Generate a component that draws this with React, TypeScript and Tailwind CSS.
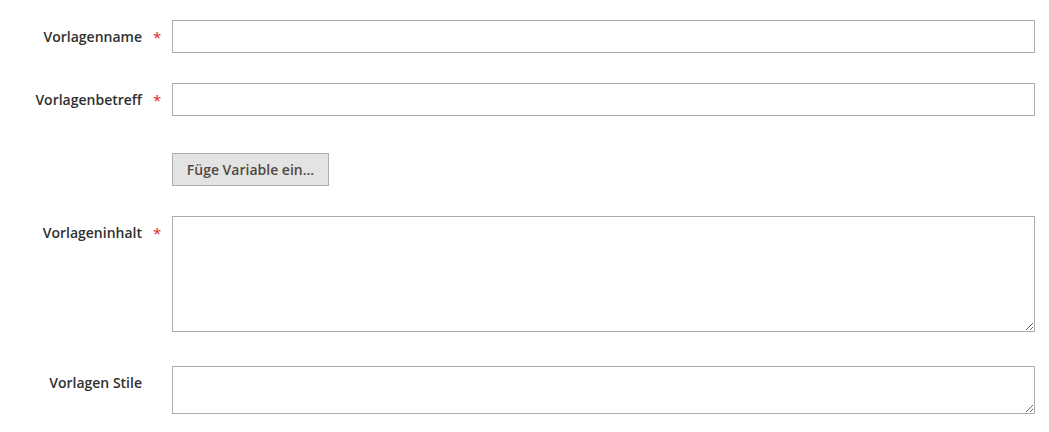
import React from "react";

function Label({ text, required }: { text: string; required?: boolean }) {
  return (
    <div className="w-[172px] shrink-0 flex justify-end h-[33px] items-center">
      <span className="text-[#303030] font-semibold">{text}</span>
      <span className="w-[30px] pl-[11px] text-[#e22626] text-[15px] font-normal leading-none pt-[2px]">
        {required ? "*" : ""}
      </span>
    </div>
  );
}

export default function App() {
  return (
    <div className="bg-white w-[1049px] h-[432px] pt-[20px] pr-[14px] font-['Open_Sans',sans-serif] text-[14px]">
      <div className="flex items-start mb-[30px]">
        <Label text="Vorlagenname" required />
        <input className="flex-1 h-[33px] border border-[#adadad] bg-white outline-none px-[10px]" />
      </div>
      <div className="flex items-start mb-[37px]">
        <Label text="Vorlagenbetreff" required />
        <input className="flex-1 h-[33px] border border-[#adadad] bg-white outline-none px-[10px]" />
      </div>
      <div className="flex items-start mb-[30px]">
        <div className="w-[172px] shrink-0" />
        <button className="h-[33px] w-[157px] border border-[#adadad] bg-[#e3e3e3] text-[#514943] font-semibold text-[14px]">
          Füge Variable ein...
        </button>
      </div>
      <div className="flex items-start mb-[34px]">
        <Label text="Vorlageninhalt" required />
        <textarea className="flex-1 h-[116px] border border-[#adadad] bg-white outline-none px-[10px] block" />
      </div>
      <div className="flex items-start">
        <Label text="Vorlagen Stile" />
        <textarea className="flex-1 h-[48px] border border-[#adadad] bg-white outline-none px-[10px] block" />
      </div>
    </div>
  );
}
